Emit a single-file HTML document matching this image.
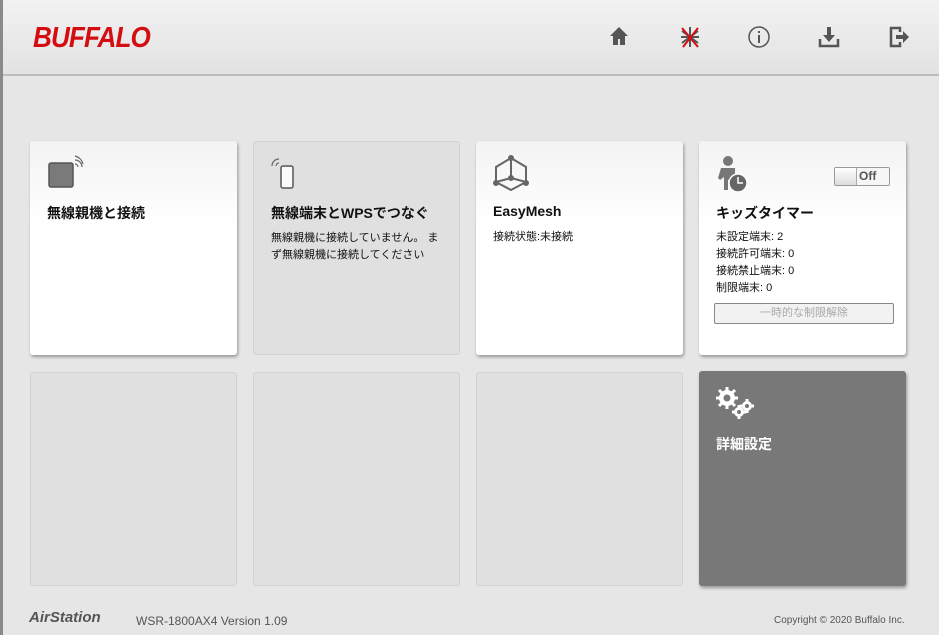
<!DOCTYPE html>
<html><head><meta charset="utf-8"><style>
*{margin:0;padding:0;box-sizing:border-box}
body{width:939px;height:635px;overflow:hidden;background:#e6e6e6;font-family:"Liberation Sans","Noto Sans CJK JP",sans-serif;position:relative;color:#111}
.lb{position:absolute;left:0;top:0;width:3px;height:635px;background:#8a8a8a}
.hd{position:absolute;left:3px;top:0;width:936px;height:76px;background:linear-gradient(#f2f2f2,#e2e2e2);border-bottom:2px solid #bdbdbd}
.logo{position:absolute;left:30px;top:22px;font:italic bold 29px "Liberation Sans",sans-serif;color:#d40d12;letter-spacing:-1px;transform:scaleX(0.9);transform-origin:left}
.ic{position:absolute;top:25px}
.card{position:absolute;width:207px;height:214px;border-radius:3px}
.w{background:linear-gradient(#f3f3f3,#fff 40%);box-shadow:1px 2px 3px rgba(0,0,0,.35)}
.e{background:#e0e0e0;border:1px solid #d2d2d2}
.t{position:absolute;left:17px;top:62px;font-size:14px;font-weight:bold}
.s{position:absolute;left:17px;font-size:11px;line-height:17px}
.ft{position:absolute;top:614px;font-size:12px;color:#555}
</style></head><body>
<div class="lb"></div>
<div class="hd">
<div class="logo">BUFFALO</div>
<svg class="ic" style="left:605px" width="22" height="22" viewBox="0 0 22 22"><path d="M11 2L2 11h3v9h5v-6h2v6h5v-9h3z" fill="#555"/></svg>
<svg class="ic" style="left:675px" width="24" height="24" viewBox="0 0 24 24" stroke-width="2"><g stroke="#555"><path d="M12 2v20M4 6l16 12M4 18l16-12M3 12h18"/></g><path d="M4 3l16 19M20 3L5 22" stroke="#d40d12"/></svg>
<svg class="ic" style="left:744px" width="24" height="24" viewBox="0 0 24 24"><circle cx="12" cy="12" r="10" fill="none" stroke="#555" stroke-width="1.5"/><rect x="11" y="10" width="2" height="8" fill="#555"/><rect x="11" y="6" width="2" height="2" fill="#555"/></svg>
<svg class="ic" style="left:814px" width="24" height="24" viewBox="0 0 24 24"><path d="M10 2h4v8h4l-6 7-6-7h4z" fill="#555"/><path d="M3 14v7h18v-7" fill="none" stroke="#555" stroke-width="2.5"/></svg>
<svg class="ic" style="left:884px" width="24" height="24" viewBox="0 0 24 24"><path d="M13 7V3H4v18h9v-4" fill="none" stroke="#555" stroke-width="2.5"/><path d="M9 10h7V6l6 6-6 6v-4H9z" fill="#555"/></svg>
</div>

<div class="card w" style="left:30px;top:141px">
<svg style="position:absolute;left:18px;top:14px" width="36" height="34" viewBox="0 0 36 34"><rect x="1" y="8" width="24" height="24" rx="2" fill="#7a7a7a" stroke="#555" stroke-width="1.5"/><path d="M27 9a3 3 0 0 1 3 3M27 5a7 7 0 0 1 7 7M27 1a11 11 0 0 1 8 8" fill="none" stroke="#666" stroke-width="1.2"/></svg>
<div class="t">無線親機と接続</div></div>
<div class="card e" style="left:253px;top:141px">
<svg style="position:absolute;left:16px;top:14px" width="30" height="34" viewBox="0 0 30 34"><rect x="11" y="10" width="12" height="22" rx="2" fill="#fafafa" stroke="#555" stroke-width="1.5"/><path d="M9 7a3 3 0 0 0-3 3M9 3a7 7 0 0 0-7 7" fill="none" stroke="#666" stroke-width="1.2"/></svg>
<div class="t" style="top:61px">無線端末とWPSでつなぐ</div>
<div class="s" style="top:88px">無線親機に接続していません。 ま<br>ず無線親機に接続してください</div></div>
<div class="card w" style="left:476px;top:141px">
<svg style="position:absolute;left:17px;top:14px" width="36" height="38" viewBox="0 0 36 38"><g fill="none" stroke="#666" stroke-width="2"><path d="M18 3L33 12v15L18 35 3 27V12z"/><path d="M18 3v20L3 27M18 23l15 4"/></g><g fill="#666"><circle cx="18" cy="3" r="3"/><circle cx="18" cy="23" r="3"/><circle cx="3" cy="28" r="3"/><circle cx="33" cy="28" r="3"/></g></svg>
<div class="t">EasyMesh</div>
<div class="s" style="top:88px">接続状態:未接続</div></div>
<div class="card w" style="left:699px;top:141px">
<svg style="position:absolute;left:17px;top:14px" width="34" height="38" viewBox="0 0 34 38"><circle cx="12" cy="6" r="5" fill="#777"/><path d="M5 13h14v22h-4v-10h-3v10H8V22l-4 3-2-2z" fill="#777"/><circle cx="22" cy="28" r="9" fill="#666" stroke="#fff" stroke-width="1.5"/><path d="M22 22v6h5" fill="none" stroke="#fff" stroke-width="1.5"/></svg>
<div style="position:absolute;left:135px;top:26px;width:56px;height:19px;border:1px solid #999;border-radius:2px;background:#f6f6f6"><div style="position:absolute;left:0;top:0;width:22px;height:17px;background:linear-gradient(#fff,#ddd);border-right:1px solid #aaa"></div><span style="position:absolute;left:24px;top:1px;font-size:12px;font-weight:bold;color:#555">Off</span></div>
<div class="t">キッズタイマー</div>
<div class="s" style="top:88px">未設定端末: 2<br>接続許可端末: 0<br>接続禁止端末: 0<br>制限端末: 0</div>
<div style="position:absolute;left:15px;top:162px;width:180px;height:21px;border:1px solid #888;border-radius:2px;background:#f2f2f2;font-size:11px;color:#aaa;text-align:center;line-height:19px">一時的な制限解除</div></div>

<div class="card e" style="left:30px;top:372px"></div>
<div class="card e" style="left:253px;top:372px"></div>
<div class="card e" style="left:476px;top:372px"></div>
<div class="card" style="left:699px;top:371px;height:215px;background:#787878;box-shadow:1px 2px 3px rgba(0,0,0,.35)">
<svg style="position:absolute;left:16px;top:15px" width="40" height="36" viewBox="0 0 40 36"><g fill="#fff"><circle cx="12" cy="12" r="8"/><circle cx="24" cy="26" r="5"/><circle cx="32" cy="20" r="5"/></g><g stroke="#fff" stroke-width="3"><path d="M12 1v22M1 12h22M4 4l16 16M20 4L4 20"/><path d="M24 19v14M17 26h14M32 13v14M25 20h14"/></g><g fill="#787878"><circle cx="12" cy="12" r="3.5"/><circle cx="24" cy="26" r="2"/><circle cx="32" cy="20" r="2"/></g></svg>
<div class="t" style="color:#fff;top:63px">詳細設定</div></div>

<div style="position:absolute;left:29px;top:609px;font:italic bold 15px 'Liberation Sans',sans-serif;color:#555">AirStation</div>
<div class="ft" style="left:136px">WSR-1800AX4 Version 1.09</div>
<div class="ft" style="left:774px;font-size:10px;top:615px">Copyright © 2020 Buffalo Inc.</div>
</body></html>
